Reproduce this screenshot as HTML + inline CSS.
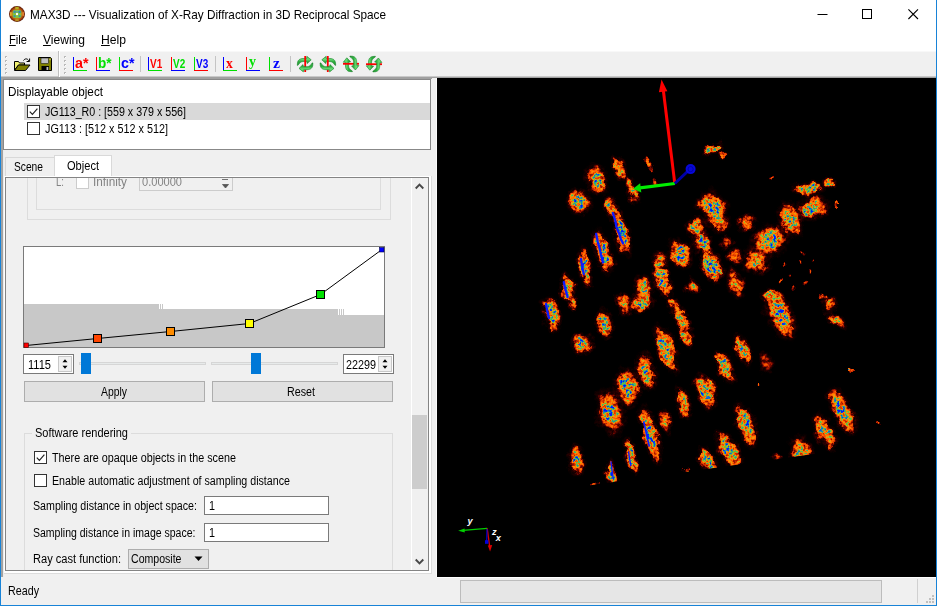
<!DOCTYPE html>
<html><head><meta charset="utf-8"><title>MAX3D</title>
<style>
html,body{margin:0;padding:0;background:#fff;}
body{width:937px;height:606px;position:relative;overflow:hidden;font-family:'Liberation Sans', sans-serif;}
.b{position:absolute;}
.t{position:absolute;white-space:pre;transform-origin:0 50%;display:block;}
svg{position:absolute;overflow:visible;}
u{text-decoration:underline;text-underline-offset:1px;}
</style></head><body>
<div class="b" style="left:0px;top:0px;width:937px;height:606px;background:#f0f0f0;"></div>
<div class="b" style="left:0px;top:0px;width:937px;height:51px;background:#ffffff;"></div>
<svg style="left:9px;top:6px" width="16" height="16" viewBox="0 0 16 16">
<defs><radialGradient id="ig" cx="50%" cy="50%" r="50%">
<stop offset="0.55" stop-color="#c47a18"/><stop offset="0.78" stop-color="#a8480e"/>
<stop offset="0.93" stop-color="#6e2006"/><stop offset="1" stop-color="#541806"/></radialGradient></defs>
<ellipse cx="8" cy="8" rx="8" ry="7.9" fill="url(#ig)"/>
<ellipse cx="1.9" cy="8" rx="1" ry="2.2" fill="#e0a828"/><ellipse cx="14.1" cy="8" rx="1" ry="2.2" fill="#e08030"/>
<rect x="6.3" y="0.8" width="3.4" height="2.4" fill="#b8b020"/><rect x="6.3" y="12.8" width="3.4" height="2.4" fill="#b89020"/>
<rect x="3.6" y="3.9" width="8.8" height="8.2" rx="2" fill="#86c23c"/>
<circle cx="5.6" cy="5.9" r="1.3" fill="#3f8fa8"/><circle cx="10.6" cy="5.9" r="1.3" fill="#2f86b0"/>
<circle cx="5.6" cy="10.1" r="1.2" fill="#3a98a0"/><circle cx="10.6" cy="10.1" r="1.2" fill="#3a98a0"/>
<circle cx="8" cy="5.6" r="0.9" fill="#5a9ab0"/>
<rect x="7" y="7.1" width="2" height="2" fill="#ffffff"/>
</svg>
<span class="t" style="left:30px;top:5.5px;font-size:13px;line-height:18px;color:#000;font-weight:400;font-family:'Liberation Sans', sans-serif;transform:scaleX(0.9052);">MAX3D --- Visualization of X-Ray Diffraction in 3D Reciprocal Space</span>
<svg style="left:780px;top:0" width="157" height="30" viewBox="0 0 157 30">
<path d="M37.5 14.5h10" stroke="#000" stroke-width="1" fill="none"/>
<rect x="82.5" y="9.5" width="9" height="9" stroke="#000" stroke-width="1" fill="none"/>
<path d="M128.4 9.4l9.6 9.6M138 9.4l-9.6 9.6" stroke="#000" stroke-width="1.1" fill="none"/>
</svg>
<span class="t" style="left:9px;top:30.5px;font-size:13px;line-height:18px;color:#000;font-weight:400;font-family:'Liberation Sans', sans-serif;transform:scaleX(0.8591);"><u>F</u>ile</span>
<span class="t" style="left:43px;top:30.5px;font-size:13px;line-height:18px;color:#000;font-weight:400;font-family:'Liberation Sans', sans-serif;transform:scaleX(0.9272);"><u>V</u>iewing</span>
<span class="t" style="left:101px;top:30.5px;font-size:13px;line-height:18px;color:#000;font-weight:400;font-family:'Liberation Sans', sans-serif;transform:scaleX(0.9346);"><u>H</u>elp</span>
<div class="b" style="left:0px;top:51px;width:937px;height:26px;background:#f0f0f0;"></div>
<div class="b" style="left:0px;top:51px;width:937px;height:1px;background:#f8f8f8;"></div>
<div class="b" style="left:0px;top:76px;width:937px;height:1px;background:#c8c8c8;"></div>
<div class="b" style="left:0px;top:77px;width:937px;height:1px;background:#a0a0a0;"></div>
<div class="b" style="left:5px;top:56px;width:2px;height:2px;background:#b8b8b8;"></div><div class="b" style="left:6px;top:57px;width:1px;height:1px;background:#ffffff;"></div><div class="b" style="left:5px;top:60px;width:2px;height:2px;background:#b8b8b8;"></div><div class="b" style="left:6px;top:61px;width:1px;height:1px;background:#ffffff;"></div><div class="b" style="left:5px;top:64px;width:2px;height:2px;background:#b8b8b8;"></div><div class="b" style="left:6px;top:65px;width:1px;height:1px;background:#ffffff;"></div><div class="b" style="left:5px;top:68px;width:2px;height:2px;background:#b8b8b8;"></div><div class="b" style="left:6px;top:69px;width:1px;height:1px;background:#ffffff;"></div><div class="b" style="left:5px;top:72px;width:2px;height:2px;background:#b8b8b8;"></div><div class="b" style="left:6px;top:73px;width:1px;height:1px;background:#ffffff;"></div>
<div class="b" style="left:64px;top:56px;width:2px;height:2px;background:#b8b8b8;"></div><div class="b" style="left:65px;top:57px;width:1px;height:1px;background:#ffffff;"></div><div class="b" style="left:64px;top:60px;width:2px;height:2px;background:#b8b8b8;"></div><div class="b" style="left:65px;top:61px;width:1px;height:1px;background:#ffffff;"></div><div class="b" style="left:64px;top:64px;width:2px;height:2px;background:#b8b8b8;"></div><div class="b" style="left:65px;top:65px;width:1px;height:1px;background:#ffffff;"></div><div class="b" style="left:64px;top:68px;width:2px;height:2px;background:#b8b8b8;"></div><div class="b" style="left:65px;top:69px;width:1px;height:1px;background:#ffffff;"></div><div class="b" style="left:64px;top:72px;width:2px;height:2px;background:#b8b8b8;"></div><div class="b" style="left:65px;top:73px;width:1px;height:1px;background:#ffffff;"></div>
<div class="b" style="left:58px;top:51px;width:1px;height:26px;background:#c0c0c0;"></div>
<div class="b" style="left:59px;top:51px;width:1px;height:26px;background:#ffffff;"></div>
<svg style="left:14px;top:56px" width="18" height="16" viewBox="0 0 18 16">
<path d="M0.5 5.5h4l1 1.5h5v2H4.5L0.5 14z" fill="#f0f070" stroke="#000" stroke-width="1" stroke-linejoin="round"/>
<path d="M0.5 14.5L4.5 9H16L11.5 14.5z" fill="#808000" stroke="#000" stroke-width="1" stroke-linejoin="round"/>
<path d="M9.5 4.5c1.5-2.2 4-2.2 5.3 0.3" fill="none" stroke="#000" stroke-width="1"/>
<path d="M15.6 2.5v3h-3" fill="none" stroke="#000" stroke-width="1"/>
</svg>
<svg style="left:38px;top:57px" width="14" height="14" viewBox="0 0 14 14">
<path d="M0.5 0.5h12l1 1v12H0.5z" fill="#808000" stroke="#000" stroke-width="1"/>
<rect x="3" y="1" width="7.5" height="5.5" fill="#c0c0c0" stroke="#000" stroke-width="0.5"/>
<rect x="11.5" y="1.8" width="1" height="1.4" fill="#e0e0a0"/>
<rect x="3.5" y="9" width="7.5" height="4.5" fill="#000"/>
<rect x="8.5" y="10" width="1.8" height="3" fill="#c0c0c0"/>
</svg>
<div class="b" style="left:73px;top:57px;width:1px;height:13px;background:#0000ff;"></div><div class="b" style="left:73px;top:70px;width:14px;height:1px;background:#00e000;"></div><span class="t" style="left:74.5px;top:52.8px;font-size:15px;line-height:20px;color:#ff0000;font-weight:700;font-family:'Liberation Sans', sans-serif;transform:scaleX(0.9515);">a*</span>
<div class="b" style="left:96px;top:57px;width:1px;height:13px;background:#ff0000;"></div><div class="b" style="left:96px;top:70px;width:14px;height:1px;background:#0000ff;"></div><span class="t" style="left:97.5px;top:52.8px;font-size:15px;line-height:20px;color:#00e000;font-weight:700;font-family:'Liberation Sans', sans-serif;transform:scaleX(0.9000);">b*</span>
<div class="b" style="left:119px;top:57px;width:1px;height:13px;background:#00e000;"></div><div class="b" style="left:119px;top:70px;width:14px;height:1px;background:#ff0000;"></div><span class="t" style="left:120.5px;top:52.8px;font-size:15px;line-height:20px;color:#0000ff;font-weight:700;font-family:'Liberation Sans', sans-serif;transform:scaleX(0.9515);">c*</span>
<div class="b" style="left:140px;top:56px;width:1px;height:16px;background:#c4c4c4;"></div>
<div class="b" style="left:148px;top:57px;width:1px;height:13px;background:#0000ff;"></div><div class="b" style="left:148px;top:70px;width:14px;height:1px;background:#00e000;"></div><span class="t" style="left:150px;top:56.0px;font-size:12.5px;line-height:17px;color:#ff0000;font-weight:700;font-family:'Liberation Sans', sans-serif;transform:scaleX(0.7975);">V1</span>
<div class="b" style="left:171px;top:57px;width:1px;height:13px;background:#ff0000;"></div><div class="b" style="left:171px;top:70px;width:14px;height:1px;background:#0000ff;"></div><span class="t" style="left:173px;top:56.0px;font-size:12.5px;line-height:17px;color:#00e000;font-weight:700;font-family:'Liberation Sans', sans-serif;transform:scaleX(0.7975);">V2</span>
<div class="b" style="left:194px;top:57px;width:1px;height:13px;background:#00e000;"></div><div class="b" style="left:194px;top:70px;width:14px;height:1px;background:#ff0000;"></div><span class="t" style="left:196px;top:56.0px;font-size:12.5px;line-height:17px;color:#0000ff;font-weight:700;font-family:'Liberation Sans', sans-serif;transform:scaleX(0.7975);">V3</span>
<div class="b" style="left:215px;top:56px;width:1px;height:16px;background:#c4c4c4;"></div>
<div class="b" style="left:223px;top:57px;width:1px;height:13px;background:#0000ff;"></div><div class="b" style="left:223px;top:70px;width:14px;height:1px;background:#00e000;"></div><span class="t" style="left:226.4px;top:52.6px;font-size:15px;line-height:20px;color:#ff0000;font-weight:700;font-family:'Liberation Serif', serif;transform:scaleX(0.9067);">x</span>
<div class="b" style="left:246px;top:57px;width:1px;height:13px;background:#ff0000;"></div><div class="b" style="left:246px;top:70px;width:14px;height:1px;background:#0000ff;"></div><span class="t" style="left:249px;top:50.6px;font-size:15px;line-height:20px;color:#00e000;font-weight:700;font-family:'Liberation Serif', serif;transform:scaleX(0.9333);">y</span>
<div class="b" style="left:269px;top:57px;width:1px;height:13px;background:#00e000;"></div><div class="b" style="left:269px;top:70px;width:14px;height:1px;background:#ff0000;"></div><span class="t" style="left:272.5px;top:52.6px;font-size:15px;line-height:20px;color:#0000ff;font-weight:700;font-family:'Liberation Serif', serif;transform:scaleX(1.0492);">z</span>
<div class="b" style="left:290px;top:56px;width:1px;height:16px;background:#c4c4c4;"></div>
<svg style="left:297px;top:56px" width="17" height="17" viewBox="0 0 17 17"><defs><linearGradient id="rg1" x1="0" y1="0" x2="0" y2="1"><stop offset="0" stop-color="#44c455"/><stop offset="0.3" stop-color="#6ee07a"/><stop offset="0.6" stop-color="#2fae40"/><stop offset="1" stop-color="#1f962f"/></linearGradient></defs>
<g transform="rotate(0 8 8)">
<path d="M0.3 9.3L0.5 6.4C1 4.5 2.2 2.6 6.1 2.5L9.8 2.3L9.8 0.3L14.2 3.8L10.2 7.6L9.8 5.6L6.1 5.5C4.2 5.6 2.2 7 1 9.3z" fill="url(#rg1)" stroke="#168226" stroke-width="0.6" stroke-linejoin="round"/>
<rect x="7.3" y="0" width="1.8" height="16" fill="#ff0000"/>
<path d="M0.3 9.3L0.5 6.4C1 4.5 2.2 2.6 6.1 2.5L9.8 2.3L9.8 0.3L14.2 3.8L10.2 7.6L9.8 5.6L6.1 5.5C4.2 5.6 2.2 7 1 9.3z" transform="rotate(180 8.1 8.1)" fill="url(#rg1)" stroke="#168226" stroke-width="0.6" stroke-linejoin="round"/>
</g></svg>
<svg style="left:320px;top:56px" width="17" height="17" viewBox="0 0 17 17"><defs><linearGradient id="rg2" x1="0" y1="0" x2="0" y2="1"><stop offset="0" stop-color="#44c455"/><stop offset="0.3" stop-color="#6ee07a"/><stop offset="0.6" stop-color="#2fae40"/><stop offset="1" stop-color="#1f962f"/></linearGradient></defs>
<g transform="rotate(0 8 8) translate(16 0) scale(-1 1)">
<path d="M0.3 9.3L0.5 6.4C1 4.5 2.2 2.6 6.1 2.5L9.8 2.3L9.8 0.3L14.2 3.8L10.2 7.6L9.8 5.6L6.1 5.5C4.2 5.6 2.2 7 1 9.3z" fill="url(#rg2)" stroke="#168226" stroke-width="0.6" stroke-linejoin="round"/>
<rect x="7.3" y="0" width="1.8" height="16" fill="#ff0000"/>
<path d="M0.3 9.3L0.5 6.4C1 4.5 2.2 2.6 6.1 2.5L9.8 2.3L9.8 0.3L14.2 3.8L10.2 7.6L9.8 5.6L6.1 5.5C4.2 5.6 2.2 7 1 9.3z" transform="rotate(180 8.1 8.1)" fill="url(#rg2)" stroke="#168226" stroke-width="0.6" stroke-linejoin="round"/>
</g></svg>
<svg style="left:343px;top:56px" width="17" height="17" viewBox="0 0 17 17"><defs><linearGradient id="rg3" x1="0" y1="0" x2="0" y2="1"><stop offset="0" stop-color="#44c455"/><stop offset="0.3" stop-color="#6ee07a"/><stop offset="0.6" stop-color="#2fae40"/><stop offset="1" stop-color="#1f962f"/></linearGradient></defs>
<g transform="rotate(-90 8 8)">
<path d="M0.3 9.3L0.5 6.4C1 4.5 2.2 2.6 6.1 2.5L9.8 2.3L9.8 0.3L14.2 3.8L10.2 7.6L9.8 5.6L6.1 5.5C4.2 5.6 2.2 7 1 9.3z" fill="url(#rg3)" stroke="#168226" stroke-width="0.6" stroke-linejoin="round"/>
<rect x="7.3" y="0" width="1.8" height="16" fill="#ff0000"/>
<path d="M0.3 9.3L0.5 6.4C1 4.5 2.2 2.6 6.1 2.5L9.8 2.3L9.8 0.3L14.2 3.8L10.2 7.6L9.8 5.6L6.1 5.5C4.2 5.6 2.2 7 1 9.3z" transform="rotate(180 8.1 8.1)" fill="url(#rg3)" stroke="#168226" stroke-width="0.6" stroke-linejoin="round"/>
</g></svg>
<svg style="left:366px;top:56px" width="17" height="17" viewBox="0 0 17 17"><defs><linearGradient id="rg4" x1="0" y1="0" x2="0" y2="1"><stop offset="0" stop-color="#44c455"/><stop offset="0.3" stop-color="#6ee07a"/><stop offset="0.6" stop-color="#2fae40"/><stop offset="1" stop-color="#1f962f"/></linearGradient></defs>
<g transform="rotate(-90 8 8) translate(16 0) scale(-1 1)">
<path d="M0.3 9.3L0.5 6.4C1 4.5 2.2 2.6 6.1 2.5L9.8 2.3L9.8 0.3L14.2 3.8L10.2 7.6L9.8 5.6L6.1 5.5C4.2 5.6 2.2 7 1 9.3z" fill="url(#rg4)" stroke="#168226" stroke-width="0.6" stroke-linejoin="round"/>
<rect x="7.3" y="0" width="1.8" height="16" fill="#ff0000"/>
<path d="M0.3 9.3L0.5 6.4C1 4.5 2.2 2.6 6.1 2.5L9.8 2.3L9.8 0.3L14.2 3.8L10.2 7.6L9.8 5.6L6.1 5.5C4.2 5.6 2.2 7 1 9.3z" transform="rotate(180 8.1 8.1)" fill="url(#rg4)" stroke="#168226" stroke-width="0.6" stroke-linejoin="round"/>
</g></svg>
<div class="b" style="left:0px;top:78px;width:432px;height:1px;background:#a0a0a0;"></div>
<div class="b" style="left:3px;top:79px;width:428px;height:71px;background:#ffffff;border:1px solid #888888;box-sizing:border-box;"></div>
<div class="b" style="left:436px;top:78px;width:1px;height:499px;background:#fafafa;"></div>
<span class="t" style="left:8px;top:83.0px;font-size:13px;line-height:18px;color:#000;font-weight:400;font-family:'Liberation Sans', sans-serif;transform:scaleX(0.9003);">Displayable object</span>
<div class="b" style="left:24px;top:103px;width:406px;height:17px;background:#d9d9d9;"></div>
<svg style="left:27px;top:105px" width="13" height="13" viewBox="0 0 13 13"><rect x="0.5" y="0.5" width="12" height="12" fill="#fff" stroke="#333"/><path d="M2.8 6.6l2.6 2.7 5-5.6" fill="none" stroke="#222" stroke-width="1.2"/></svg>
<svg style="left:27px;top:122px" width="13" height="13" viewBox="0 0 13 13"><rect x="0.5" y="0.5" width="12" height="12" fill="#fff" stroke="#333"/></svg>
<span class="t" style="left:45px;top:103.5px;font-size:12px;line-height:16px;color:#000;font-weight:400;font-family:'Liberation Sans', sans-serif;transform:scaleX(0.8892);">JG113_R0 : [559 x 379 x 556]</span>
<span class="t" style="left:45px;top:120.5px;font-size:12px;line-height:16px;color:#000;font-weight:400;font-family:'Liberation Sans', sans-serif;transform:scaleX(0.9008);">JG113 : [512 x 512 x 512]</span>
<div class="b" style="left:5px;top:157px;width:50px;height:20px;background:#f0f0f0;border:1px solid #d9d9d9;box-sizing:border-box;"></div>
<div class="b" style="left:54px;top:155px;width:58px;height:23px;background:#ffffff;border:1px solid #d9d9d9;box-sizing:border-box;"></div>
<span class="t" style="left:14px;top:158.5px;font-size:12px;line-height:16px;color:#000;font-weight:400;font-family:'Liberation Sans', sans-serif;transform:scaleX(0.8522);">Scene</span>
<span class="t" style="left:67px;top:157.5px;font-size:12px;line-height:16px;color:#000;font-weight:400;font-family:'Liberation Sans', sans-serif;transform:scaleX(0.9225);">Object</span>
<div class="b" style="left:4px;top:176px;width:427px;height:397px;background:#ffffff;"></div>
<div class="b" style="left:4px;top:573px;width:428px;height:1px;background:#dcdcdc;"></div>
<div class="b" style="left:431px;top:176px;width:1px;height:398px;background:#dcdcdc;"></div>
<div class="b" style="left:5px;top:177px;width:424px;height:394px;border:1px solid #848484;box-sizing:border-box;background:#f0f0f0;overflow:hidden">
<div class="b" style="left:21px;top:-28px;width:364px;height:70px;border:1px solid #dcdcdc;box-sizing:border-box;"></div>
<div class="b" style="left:30px;top:-28px;width:345px;height:60px;border:1px solid #dcdcdc;box-sizing:border-box;"></div>
<span class="t" style="left:50px;top:-4.0px;font-size:12px;line-height:16px;color:#838383;font-weight:400;font-family:'Liberation Sans', sans-serif;transform:scaleX(0.7988);">L:</span>
<div class="b" style="left:70px;top:-2px;width:13px;height:13px;background:#fff;border:1px solid #cccccc;box-sizing:border-box;"></div>
<span class="t" style="left:87px;top:-4.0px;font-size:12px;line-height:16px;color:#838383;font-weight:400;font-family:'Liberation Sans', sans-serif;transform:scaleX(0.9802);">Infinity</span>
<div class="b" style="left:133px;top:-6px;width:94px;height:19px;background:#f0f0f0;border:1px solid #cccccc;box-sizing:border-box;"></div>
<span class="t" style="left:136px;top:-4.0px;font-size:12px;line-height:16px;color:#838383;font-weight:400;font-family:'Liberation Sans', sans-serif;transform:scaleX(0.9219);">0.00000</span>
<svg style="left:215px;top:0px" width="9" height="12" viewBox="0 0 9 12"><path d="M1 1.5h6M1.5 6.5h6l-3 3.5z" fill="#555" stroke="#555" stroke-width="0.8"/></svg>
<div class="b" style="left:17px;top:68px;width:362px;height:102px;background:#ffffff;border:1px solid #7a7a7a;box-sizing:border-box;"></div>
<svg style="left:18px;top:69px" width="360" height="100" viewBox="24 247 360 100">
<path d="M24 347V304H159V309H160V304h1v5h1v-5h1v5H337V309h1v6h1v-6h1v6h1v-6h1v6h1v-6h1v6H384V347z" fill="#c8c8c8"/>
<path d="M26 345.5L97.5 338.5L170.5 331.5L249.5 323.5L320.5 294.5L382 249.5" fill="none" stroke="#000" stroke-width="1"/>
<rect x="24" y="343" width="4.5" height="4.5" fill="#ff0000" stroke="#400" stroke-width="0.6"/>
<rect x="93.5" y="334.5" width="8" height="8" fill="#ff4500" stroke="#000" stroke-width="1"/>
<rect x="166.5" y="327.5" width="8" height="8" fill="#ff8c00" stroke="#000" stroke-width="1"/>
<rect x="245.5" y="319.5" width="8" height="8" fill="#ffff00" stroke="#000" stroke-width="1"/>
<rect x="316.5" y="290.5" width="8" height="8" fill="#00e000" stroke="#000" stroke-width="1"/>
<rect x="379.5" y="247.5" width="4.5" height="4.5" fill="#0000ff" stroke="#004" stroke-width="0.6"/>
</svg>
<div class="b" style="left:17px;top:176px;width:51px;height:20px;background:#fff;border:1px solid #7a7a7a;box-sizing:border-box;"></div><div class="b" style="left:52px;top:178px;width:14px;height:16px;background:#f0f0f0;border:1px solid #c8c8c8;box-sizing:border-box;"></div><svg style="left:55px;top:180px" width="8" height="12" viewBox="0 0 8 12"><path d="M1.5 4.3h5l-2.5-3zM1.5 7.7h5l-2.5 3z" fill="#000"/></svg><span class="t" style="left:22px;top:178.5px;font-size:12px;line-height:16px;color:#000;font-weight:400;font-family:'Liberation Sans', sans-serif;transform:scaleX(0.9229);">1115</span>
<div class="b" style="left:337px;top:176px;width:51px;height:20px;background:#fff;border:1px solid #7a7a7a;box-sizing:border-box;"></div><div class="b" style="left:372px;top:178px;width:14px;height:16px;background:#f0f0f0;border:1px solid #c8c8c8;box-sizing:border-box;"></div><svg style="left:375px;top:180px" width="8" height="12" viewBox="0 0 8 12"><path d="M1.5 4.3h5l-2.5-3zM1.5 7.7h5l-2.5 3z" fill="#000"/></svg><span class="t" style="left:340px;top:178.5px;font-size:12px;line-height:16px;color:#000;font-weight:400;font-family:'Liberation Sans', sans-serif;transform:scaleX(0.8989);">22299</span>
<div class="b" style="left:73px;top:184px;width:127px;height:3px;background:#e7eaea;border:1px solid #d6d6d6;box-sizing:border-box;"></div>
<div class="b" style="left:205px;top:184px;width:127px;height:3px;background:#e7eaea;border:1px solid #d6d6d6;box-sizing:border-box;"></div>
<div class="b" style="left:75px;top:175px;width:10px;height:21px;background:#0078d7;"></div>
<div class="b" style="left:245px;top:175px;width:10px;height:21px;background:#0078d7;"></div>
<div class="b" style="left:18px;top:203px;width:181px;height:21px;background:#e1e1e1;border:1px solid #adadad;box-sizing:border-box;"></div>
<div class="b" style="left:206px;top:203px;width:181px;height:21px;background:#e1e1e1;border:1px solid #adadad;box-sizing:border-box;"></div>
<span class="t" style="left:95px;top:206.0px;font-size:12px;line-height:16px;color:#000;font-weight:400;font-family:'Liberation Sans', sans-serif;transform:scaleX(0.8658);">Apply</span>
<span class="t" style="left:281px;top:206.0px;font-size:12px;line-height:16px;color:#000;font-weight:400;font-family:'Liberation Sans', sans-serif;transform:scaleX(0.8929);">Reset</span>
<div class="b" style="left:18px;top:255px;width:369px;height:160px;border:1px solid #dcdcdc;box-sizing:border-box;"></div>
<div class="b" style="left:26px;top:248px;width:99px;height:14px;background:#f0f0f0;"></div>
<span class="t" style="left:29px;top:247.0px;font-size:12px;line-height:16px;color:#000;font-weight:400;font-family:'Liberation Sans', sans-serif;transform:scaleX(0.9172);">Software rendering</span>
<svg style="left:28px;top:273px" width="13" height="13" viewBox="0 0 13 13"><rect x="0.5" y="0.5" width="12" height="12" fill="#fff" stroke="#333"/><path d="M2.8 6.6l2.6 2.7 5-5.6" fill="none" stroke="#222" stroke-width="1.2"/></svg>
<svg style="left:28px;top:296px" width="13" height="13" viewBox="0 0 13 13"><rect x="0.5" y="0.5" width="12" height="12" fill="#fff" stroke="#333"/></svg>
<span class="t" style="left:46px;top:272.0px;font-size:12px;line-height:16px;color:#000;font-weight:400;font-family:'Liberation Sans', sans-serif;transform:scaleX(0.8984);">There are opaque objects in the scene</span>
<span class="t" style="left:46px;top:295.0px;font-size:12px;line-height:16px;color:#000;font-weight:400;font-family:'Liberation Sans', sans-serif;transform:scaleX(0.8897);">Enable automatic adjustment of sampling distance</span>
<span class="t" style="left:27px;top:320.0px;font-size:12px;line-height:16px;color:#000;font-weight:400;font-family:'Liberation Sans', sans-serif;transform:scaleX(0.8875);">Sampling distance in object space:</span>
<span class="t" style="left:27px;top:347.0px;font-size:12px;line-height:16px;color:#000;font-weight:400;font-family:'Liberation Sans', sans-serif;transform:scaleX(0.8763);">Sampling distance in image space:</span>
<div class="b" style="left:198px;top:318px;width:125px;height:19px;background:#fff;border:1px solid #7a7a7a;box-sizing:border-box;"></div>
<div class="b" style="left:198px;top:345px;width:125px;height:19px;background:#fff;border:1px solid #7a7a7a;box-sizing:border-box;"></div>
<span class="t" style="left:203px;top:320.0px;font-size:12px;line-height:16px;color:#000;font-weight:400;font-family:'Liberation Sans', sans-serif;transform:scaleX(0.8972);">1</span>
<span class="t" style="left:203px;top:347.0px;font-size:12px;line-height:16px;color:#000;font-weight:400;font-family:'Liberation Sans', sans-serif;transform:scaleX(0.8972);">1</span>
<span class="t" style="left:27px;top:373.0px;font-size:12px;line-height:16px;color:#000;font-weight:400;font-family:'Liberation Sans', sans-serif;transform:scaleX(0.9225);">Ray cast function:</span>
<div class="b" style="left:122px;top:371px;width:81px;height:20px;background:#e1e1e1;border:1px solid #adadad;box-sizing:border-box;"></div>
<span class="t" style="left:125px;top:373.0px;font-size:12px;line-height:16px;color:#000;font-weight:400;font-family:'Liberation Sans', sans-serif;transform:scaleX(0.8804);">Composite</span>
<svg style="left:188px;top:378px" width="9" height="6" viewBox="0 0 9 6"><path d="M0.5 0.5h8l-4 4.5z" fill="#000"/></svg>
<div class="b" style="left:405px;top:0px;width:1px;height:392px;background:#ffffff;"></div>
<div class="b" style="left:406px;top:0px;width:16px;height:392px;background:#f0f0f0;"></div>
<div class="b" style="left:406px;top:237px;width:15px;height:74px;background:#cdcdcd;"></div>
<svg style="left:409px;top:5px" width="9" height="7" viewBox="0 0 9 7"><path d="M0.7 5.5L4.5 1.7L8.3 5.5" fill="none" stroke="#484848" stroke-width="1.9"/></svg>
<svg style="left:409px;top:380px" width="9" height="7" viewBox="0 0 9 7"><path d="M0.7 1.5L4.5 5.3L8.3 1.5" fill="none" stroke="#484848" stroke-width="1.9"/></svg>
</div>
<span class="t" style="left:7.6px;top:582.0px;font-size:13px;line-height:18px;color:#000;font-weight:400;font-family:'Liberation Sans', sans-serif;transform:scaleX(0.8249);">Ready</span>
<div class="b" style="left:460px;top:580px;width:422px;height:23px;background:#e6e6e6;border:1px solid #bcbcbc;box-sizing:border-box;"></div>
<div class="b" style="left:917px;top:579px;width:1px;height:24px;background:#d0d0d0;"></div>
<div class="b" style="left:932px;top:601px;width:2px;height:2px;background:#bfbfbf;"></div><div class="b" style="left:929px;top:601px;width:2px;height:2px;background:#bfbfbf;"></div><div class="b" style="left:926px;top:601px;width:2px;height:2px;background:#bfbfbf;"></div><div class="b" style="left:932px;top:598px;width:2px;height:2px;background:#bfbfbf;"></div><div class="b" style="left:929px;top:598px;width:2px;height:2px;background:#bfbfbf;"></div><div class="b" style="left:932px;top:595px;width:2px;height:2px;background:#bfbfbf;"></div>
<div class="b" style="left:1px;top:78px;width:2px;height:499px;background:#a2a2a2;"></div>
<div class="b" style="left:3px;top:150px;width:1px;height:427px;background:#ececec;"></div>
<div class="b" style="left:437px;top:577px;width:499px;height:1px;background:#ffffff;"></div>
<div class="b" style="left:0px;top:0px;width:1px;height:606px;background:#1883d7;"></div>
<div class="b" style="left:936px;top:0px;width:1px;height:606px;background:#1883d7;"></div>
<div class="b" style="left:0px;top:605px;width:937px;height:1px;background:#1883d7;"></div>
<svg style="left:437px;top:78px" width="499" height="499" viewBox="437 78 499 499">
<defs>
<radialGradient id="bg"><stop offset="0" stop-color="#fff" stop-opacity="1"/><stop offset="0.4" stop-color="#fff" stop-opacity="0.86"/><stop offset="0.62" stop-color="#fff" stop-opacity="0.56"/><stop offset="0.82" stop-color="#fff" stop-opacity="0.30"/><stop offset="1" stop-color="#fff" stop-opacity="0"/></radialGradient>
<radialGradient id="hg"><stop offset="0" stop-color="#fff" stop-opacity="0.16"/><stop offset="0.6" stop-color="#fff" stop-opacity="0.11"/><stop offset="1" stop-color="#fff" stop-opacity="0"/></radialGradient>
<clipPath id="cp"><path d="M437 78H936V448L814 454L560 489.5L437 507z"/></clipPath>
<filter id="jet" filterUnits="userSpaceOnUse" x="437" y="78" width="499" height="499" color-interpolation-filters="sRGB">
<feTurbulence type="fractalNoise" baseFrequency="0.09" numOctaves="3" seed="11" result="lf"/>
<feDisplacementMap in="SourceGraphic" in2="lf" scale="10" xChannelSelector="R" yChannelSelector="G" result="d"/>
<feTurbulence type="fractalNoise" baseFrequency="0.3" numOctaves="2" seed="5" result="n"/>
<feColorMatrix in="n" type="matrix" values="2.6 0 0 0 -0.8  2.6 0 0 0 -0.8  2.6 0 0 0 -0.8  0 0 0 0 1" result="ng"/>
<feComposite in="d" in2="ng" operator="arithmetic" k1="0.84" k2="0.31" k3="0" k4="0" result="m"/>
<feGaussianBlur in="m" stdDeviation="0.45" result="mb"/>
<feComponentTransfer in="mb">
<feFuncR type="table" tableValues="0 .12 .28 .48 .65 .80 .90 .96 1 1 1 1 .80 .50 .35 .25 .18 .12 .08 .04 0"/><feFuncG type="table" tableValues="0 0 .01 .04 .10 .18 .26 .33 .40 .45 .50 .56 .68 .74 .74 .70 .62 .52 .40 .25 .10"/><feFuncB type="table" tableValues="0 0 0 0 0 0 0 0 0 0 0 .03 .10 .20 .30 .42 .55 .70 .82 .95 1"/>
</feComponentTransfer>
<feGaussianBlur stdDeviation="0.3"/>
</filter>
</defs>
<rect x="437" y="78" width="499" height="499" fill="#000"/>
<g clip-path="url(#cp)"><g filter="url(#jet)"><rect x="437" y="78" width="499" height="499" fill="#000"/>
<ellipse cx="597" cy="180" rx="13.7" ry="18.7" transform="rotate(-10 597 180)" fill="url(#hg)"/>
<ellipse cx="597" cy="180" rx="9.4" ry="14.5" transform="rotate(-10 597 180)" fill="url(#bg)" opacity="1.00"/>
<ellipse cx="579" cy="202" rx="14.3" ry="14.8" transform="rotate(0 579 202)" fill="url(#hg)"/>
<ellipse cx="579" cy="202" rx="9.8" ry="11.3" transform="rotate(0 579 202)" fill="url(#bg)" opacity="1.00"/>
<ellipse cx="619" cy="168" rx="8.3" ry="16.1" transform="rotate(-20 619 168)" fill="url(#hg)"/>
<path d="M0 -13.3Q11.4 0 0 13.3Q-11.4 0 0 -13.3z" transform="translate(619 168) rotate(-20)" fill="url(#bg)" opacity="0.80"/>
<ellipse cx="632" cy="190" rx="6.6" ry="16.1" transform="rotate(-15 632 190)" fill="url(#hg)"/>
<path d="M0 -13.3Q8.7 0 0 13.3Q-8.7 0 0 -13.3z" transform="translate(632 190) rotate(-15)" fill="url(#bg)" opacity="0.70"/>
<path d="M0 -8.8Q6.8 0 0 8.8Q-6.8 0 0 -8.8z" transform="translate(650 164) rotate(-25)" fill="url(#bg)" opacity="0.50"/>
<path d="M0 -5.9Q5.0 0 0 5.9Q-5.0 0 0 -5.9z" transform="translate(656 182) rotate(-30)" fill="url(#bg)" opacity="0.40"/>
<ellipse cx="610" cy="206" rx="7.8" ry="11.6" transform="rotate(-15 610 206)" fill="url(#hg)"/>
<ellipse cx="610" cy="206" rx="5.0" ry="8.7" transform="rotate(-15 610 206)" fill="url(#bg)" opacity="0.90"/>
<ellipse cx="621" cy="231" rx="9.5" ry="30.3" transform="rotate(-15 621 231)" fill="url(#hg)"/>
<path d="M0 -25.9Q13.3 0 0 25.9Q-13.3 0 0 -25.9z" transform="translate(621 231) rotate(-15)" fill="url(#bg)" opacity="1.00"/>
<ellipse cx="603" cy="252" rx="10.1" ry="26.4" transform="rotate(-15 603 252)" fill="url(#hg)"/>
<path d="M0 -22.5Q14.2 0 0 22.5Q-14.2 0 0 -22.5z" transform="translate(603 252) rotate(-15)" fill="url(#bg)" opacity="1.00"/>
<ellipse cx="585" cy="268" rx="8.3" ry="22.5" transform="rotate(-12 585 268)" fill="url(#hg)"/>
<path d="M0 -19.1Q11.4 0 0 19.1Q-11.4 0 0 -19.1z" transform="translate(585 268) rotate(-12)" fill="url(#bg)" opacity="0.90"/>
<ellipse cx="568" cy="289" rx="8.9" ry="18.7" transform="rotate(-12 568 289)" fill="url(#hg)"/>
<path d="M0 -15.6Q12.3 0 0 15.6Q-12.3 0 0 -15.6z" transform="translate(568 289) rotate(-12)" fill="url(#bg)" opacity="0.90"/>
<ellipse cx="552" cy="313" rx="10.7" ry="21.3" transform="rotate(-10 552 313)" fill="url(#hg)"/>
<path d="M0 -17.9Q15.1 0 0 17.9Q-15.1 0 0 -17.9z" transform="translate(552 313) rotate(-10)" fill="url(#bg)" opacity="1.00"/>
<ellipse cx="572" cy="303" rx="6.6" ry="7.7" transform="rotate(0 572 303)" fill="url(#hg)"/>
<ellipse cx="572" cy="303" rx="4.1" ry="5.5" transform="rotate(0 572 303)" fill="url(#bg)" opacity="0.50"/>
<ellipse cx="714" cy="149" rx="12.5" ry="5.7" transform="rotate(-22 714 149)" fill="url(#hg)"/>
<path d="M-9.2 0Q0 8.1 9.2 0Q0 -8.1 -9.2 0z" transform="translate(714 149) rotate(-22)" fill="url(#bg)" opacity="0.90"/>
<ellipse cx="723" cy="154" rx="8.9" ry="4.4" transform="rotate(-22 723 154)" fill="url(#hg)"/>
<path d="M-6.4 0Q0 5.9 6.4 0Q0 -5.9 -6.4 0z" transform="translate(723 154) rotate(-22)" fill="url(#bg)" opacity="0.60"/>
<ellipse cx="715" cy="211" rx="14.9" ry="26.4" transform="rotate(-20 715 211)" fill="url(#hg)"/>
<path d="M0 -22.5Q21.6 0 0 22.5Q-21.6 0 0 -22.5z" transform="translate(715 211) rotate(-20)" fill="url(#bg)" opacity="0.90"/>
<ellipse cx="709" cy="206" rx="17.3" ry="8.3" transform="rotate(20 709 206)" fill="url(#hg)"/>
<path d="M-13.0 0Q0 12.6 13.0 0Q0 -12.6 -13.0 0z" transform="translate(709 206) rotate(20)" fill="url(#bg)" opacity="0.70"/>
<ellipse cx="697" cy="227" rx="12.5" ry="12.2" transform="rotate(-30 697 227)" fill="url(#hg)"/>
<ellipse cx="697" cy="227" rx="8.5" ry="9.2" transform="rotate(-30 697 227)" fill="url(#bg)" opacity="0.80"/>
<ellipse cx="701" cy="242" rx="12.5" ry="12.2" transform="rotate(-30 701 242)" fill="url(#hg)"/>
<ellipse cx="701" cy="242" rx="8.5" ry="9.2" transform="rotate(-30 701 242)" fill="url(#bg)" opacity="0.80"/>
<ellipse cx="680" cy="254" rx="13.1" ry="18.7" transform="rotate(-25 680 254)" fill="url(#hg)"/>
<ellipse cx="680" cy="254" rx="9.0" ry="14.5" transform="rotate(-25 680 254)" fill="url(#bg)" opacity="1.00"/>
<ellipse cx="660" cy="261" rx="11.3" ry="10.3" transform="rotate(-30 660 261)" fill="url(#hg)"/>
<ellipse cx="660" cy="261" rx="7.6" ry="7.6" transform="rotate(-30 660 261)" fill="url(#bg)" opacity="0.70"/>
<ellipse cx="662" cy="279" rx="10.7" ry="22.5" transform="rotate(-20 662 279)" fill="url(#hg)"/>
<path d="M0 -19.1Q15.1 0 0 19.1Q-15.1 0 0 -19.1z" transform="translate(662 279) rotate(-20)" fill="url(#bg)" opacity="0.90"/>
<ellipse cx="644" cy="289" rx="11.3" ry="17.4" transform="rotate(-15 644 289)" fill="url(#hg)"/>
<ellipse cx="644" cy="289" rx="7.6" ry="13.4" transform="rotate(-15 644 289)" fill="url(#bg)" opacity="0.90"/>
<ellipse cx="712" cy="265" rx="12.5" ry="17.4" transform="rotate(-25 712 265)" fill="url(#hg)"/>
<ellipse cx="712" cy="265" rx="8.5" ry="13.4" transform="rotate(-25 712 265)" fill="url(#bg)" opacity="0.80"/>
<ellipse cx="693" cy="287" rx="8.3" ry="10.9" transform="rotate(-20 693 287)" fill="url(#hg)"/>
<ellipse cx="693" cy="287" rx="5.4" ry="8.1" transform="rotate(-20 693 287)" fill="url(#bg)" opacity="0.70"/>
<ellipse cx="770" cy="177" rx="2.4" ry="2.3" transform="rotate(0 770 177)" fill="url(#bg)" opacity="0.40"/>
<ellipse cx="808" cy="189" rx="19.6" ry="9.0" transform="rotate(-5 808 189)" fill="url(#hg)"/>
<path d="M-14.9 0Q0 13.7 14.9 0Q0 -13.7 -14.9 0z" transform="translate(808 189) rotate(-5)" fill="url(#bg)" opacity="0.95"/>
<ellipse cx="830" cy="183" rx="7.2" ry="5.7" transform="rotate(0 830 183)" fill="url(#hg)"/>
<ellipse cx="830" cy="183" rx="4.6" ry="3.9" transform="rotate(0 830 183)" fill="url(#bg)" opacity="0.80"/>
<ellipse cx="812" cy="208" rx="19.6" ry="13.5" transform="rotate(-15 812 208)" fill="url(#hg)"/>
<ellipse cx="812" cy="208" rx="13.8" ry="10.2" transform="rotate(-15 812 208)" fill="url(#bg)" opacity="1.00"/>
<ellipse cx="790" cy="220" rx="12.5" ry="22.5" transform="rotate(-25 790 220)" fill="url(#hg)"/>
<path d="M0 -19.1Q17.9 0 0 19.1Q-17.9 0 0 -19.1z" transform="translate(790 220) rotate(-25)" fill="url(#bg)" opacity="0.90"/>
<ellipse cx="837" cy="203" rx="2.4" ry="3.4" transform="rotate(0 837 203)" fill="url(#bg)" opacity="0.70"/>
<ellipse cx="746" cy="223" rx="10.7" ry="9.6" transform="rotate(-40 746 223)" fill="url(#hg)"/>
<ellipse cx="746" cy="223" rx="7.2" ry="7.1" transform="rotate(-40 746 223)" fill="url(#bg)" opacity="0.60"/>
<ellipse cx="770" cy="240" rx="22.0" ry="18.7" transform="rotate(-30 770 240)" fill="url(#hg)"/>
<ellipse cx="770" cy="240" rx="15.6" ry="14.5" transform="rotate(-30 770 240)" fill="url(#bg)" opacity="1.00"/>
<ellipse cx="756" cy="261" rx="16.1" ry="14.8" transform="rotate(-40 756 261)" fill="url(#hg)"/>
<ellipse cx="756" cy="261" rx="11.2" ry="11.3" transform="rotate(-40 756 261)" fill="url(#bg)" opacity="0.80"/>
<ellipse cx="735" cy="256" rx="8.3" ry="9.0" transform="rotate(-30 735 256)" fill="url(#hg)"/>
<ellipse cx="735" cy="256" rx="5.4" ry="6.5" transform="rotate(-30 735 256)" fill="url(#bg)" opacity="0.50"/>
<ellipse cx="727" cy="242" rx="8.3" ry="7.0" transform="rotate(-30 727 242)" fill="url(#hg)"/>
<ellipse cx="727" cy="242" rx="5.4" ry="4.9" transform="rotate(-30 727 242)" fill="url(#bg)" opacity="0.50"/>
<ellipse cx="704" cy="244" rx="7.8" ry="16.1" transform="rotate(-25 704 244)" fill="url(#hg)"/>
<path d="M0 -13.3Q10.5 0 0 13.3Q-10.5 0 0 -13.3z" transform="translate(704 244) rotate(-25)" fill="url(#bg)" opacity="0.80"/>
<ellipse cx="711" cy="268" rx="10.7" ry="18.7" transform="rotate(-25 711 268)" fill="url(#hg)"/>
<path d="M0 -15.6Q15.1 0 0 15.6Q-15.1 0 0 -15.6z" transform="translate(711 268) rotate(-25)" fill="url(#bg)" opacity="0.90"/>
<ellipse cx="735" cy="283" rx="10.7" ry="17.4" transform="rotate(-20 735 283)" fill="url(#hg)"/>
<ellipse cx="735" cy="283" rx="7.2" ry="13.4" transform="rotate(-20 735 283)" fill="url(#bg)" opacity="0.60"/>
<ellipse cx="772" cy="296" rx="13.7" ry="7.7" transform="rotate(10 772 296)" fill="url(#hg)"/>
<path d="M-10.2 0Q0 11.5 10.2 0Q0 -11.5 -10.2 0z" transform="translate(772 296) rotate(10)" fill="url(#bg)" opacity="0.80"/>
<ellipse cx="804" cy="282" rx="2.8" ry="2.8" transform="rotate(0 804 282)" fill="url(#bg)" opacity="0.40"/>
<path d="M-4.0 0Q0 5.9 4.0 0Q0 -5.9 -4.0 0z" transform="translate(823 297) rotate(0)" fill="url(#bg)" opacity="0.50"/>
<ellipse cx="785" cy="265" rx="1.9" ry="2.3" transform="rotate(0 785 265)" fill="url(#bg)" opacity="0.35"/>
<ellipse cx="790" cy="275" rx="1.9" ry="2.3" transform="rotate(0 790 275)" fill="url(#bg)" opacity="0.35"/>
<ellipse cx="798" cy="262" rx="1.9" ry="2.3" transform="rotate(0 798 262)" fill="url(#bg)" opacity="0.35"/>
<ellipse cx="810" cy="270" rx="1.9" ry="2.3" transform="rotate(0 810 270)" fill="url(#bg)" opacity="0.35"/>
<ellipse cx="795" cy="288" rx="1.9" ry="2.3" transform="rotate(0 795 288)" fill="url(#bg)" opacity="0.35"/>
<ellipse cx="780" cy="280" rx="1.9" ry="2.3" transform="rotate(0 780 280)" fill="url(#bg)" opacity="0.35"/>
<ellipse cx="803" cy="253" rx="1.9" ry="2.3" transform="rotate(0 803 253)" fill="url(#bg)" opacity="0.35"/>
<ellipse cx="815" cy="262" rx="1.9" ry="2.3" transform="rotate(0 815 262)" fill="url(#bg)" opacity="0.30"/>
<ellipse cx="604" cy="324" rx="10.7" ry="17.4" transform="rotate(-10 604 324)" fill="url(#hg)"/>
<ellipse cx="604" cy="324" rx="7.2" ry="13.4" transform="rotate(-10 604 324)" fill="url(#bg)" opacity="0.95"/>
<ellipse cx="582" cy="344" rx="12.5" ry="13.5" transform="rotate(-10 582 344)" fill="url(#hg)"/>
<ellipse cx="582" cy="344" rx="8.5" ry="10.2" transform="rotate(-10 582 344)" fill="url(#bg)" opacity="1.00"/>
<ellipse cx="624" cy="304" rx="8.3" ry="13.5" transform="rotate(-15 624 304)" fill="url(#hg)"/>
<ellipse cx="624" cy="304" rx="5.4" ry="10.2" transform="rotate(-15 624 304)" fill="url(#bg)" opacity="0.70"/>
<ellipse cx="642" cy="303" rx="14.9" ry="10.9" transform="rotate(-10 642 303)" fill="url(#hg)"/>
<ellipse cx="642" cy="303" rx="10.3" ry="8.1" transform="rotate(-10 642 303)" fill="url(#bg)" opacity="0.90"/>
<ellipse cx="672" cy="304" rx="8.3" ry="7.7" transform="rotate(-20 672 304)" fill="url(#hg)"/>
<ellipse cx="672" cy="304" rx="5.4" ry="5.5" transform="rotate(-20 672 304)" fill="url(#bg)" opacity="0.50"/>
<ellipse cx="681" cy="318" rx="9.5" ry="17.4" transform="rotate(-28 681 318)" fill="url(#hg)"/>
<path d="M0 -14.5Q13.3 0 0 14.5Q-13.3 0 0 -14.5z" transform="translate(681 318) rotate(-28)" fill="url(#bg)" opacity="0.90"/>
<ellipse cx="686" cy="337" rx="7.2" ry="13.5" transform="rotate(-28 686 337)" fill="url(#hg)"/>
<path d="M0 -11.1Q9.6 0 0 11.1Q-9.6 0 0 -11.1z" transform="translate(686 337) rotate(-28)" fill="url(#bg)" opacity="0.80"/>
<ellipse cx="666" cy="349" rx="10.7" ry="30.3" transform="rotate(-20 666 349)" fill="url(#hg)"/>
<path d="M0 -25.9Q15.1 0 0 25.9Q-15.1 0 0 -25.9z" transform="translate(666 349) rotate(-20)" fill="url(#bg)" opacity="0.95"/>
<ellipse cx="646" cy="372" rx="11.3" ry="22.5" transform="rotate(-15 646 372)" fill="url(#hg)"/>
<path d="M0 -19.1Q16.0 0 0 19.1Q-16.0 0 0 -19.1z" transform="translate(646 372) rotate(-15)" fill="url(#bg)" opacity="0.95"/>
<ellipse cx="627" cy="387" rx="14.9" ry="22.5" transform="rotate(-10 627 387)" fill="url(#hg)"/>
<ellipse cx="627" cy="387" rx="10.3" ry="17.7" transform="rotate(-10 627 387)" fill="url(#bg)" opacity="1.00"/>
<ellipse cx="610" cy="412" rx="16.1" ry="27.7" transform="rotate(-12 610 412)" fill="url(#hg)"/>
<ellipse cx="610" cy="412" rx="11.2" ry="21.9" transform="rotate(-12 610 412)" fill="url(#bg)" opacity="1.00"/>
<ellipse cx="704" cy="390" rx="11.3" ry="18.7" transform="rotate(-15 704 390)" fill="url(#hg)"/>
<ellipse cx="704" cy="390" rx="7.6" ry="14.5" transform="rotate(-15 704 390)" fill="url(#bg)" opacity="0.70"/>
<ellipse cx="683" cy="402" rx="8.9" ry="18.7" transform="rotate(-15 683 402)" fill="url(#hg)"/>
<path d="M0 -15.6Q12.3 0 0 15.6Q-12.3 0 0 -15.6z" transform="translate(683 402) rotate(-15)" fill="url(#bg)" opacity="0.90"/>
<ellipse cx="665" cy="421" rx="7.8" ry="14.8" transform="rotate(-15 665 421)" fill="url(#hg)"/>
<path d="M0 -12.2Q10.5 0 0 12.2Q-10.5 0 0 -12.2z" transform="translate(665 421) rotate(-15)" fill="url(#bg)" opacity="0.60"/>
<ellipse cx="650" cy="435" rx="9.5" ry="34.2" transform="rotate(-15 650 435)" fill="url(#hg)"/>
<path d="M0 -29.4Q13.3 0 0 29.4Q-13.3 0 0 -29.4z" transform="translate(650 435) rotate(-15)" fill="url(#bg)" opacity="1.00"/>
<ellipse cx="631" cy="456" rx="7.8" ry="21.3" transform="rotate(-12 631 456)" fill="url(#hg)"/>
<path d="M0 -17.9Q10.5 0 0 17.9Q-10.5 0 0 -17.9z" transform="translate(631 456) rotate(-12)" fill="url(#bg)" opacity="0.95"/>
<ellipse cx="576" cy="459" rx="10.7" ry="17.4" transform="rotate(-5 576 459)" fill="url(#hg)"/>
<ellipse cx="576" cy="459" rx="7.2" ry="13.4" transform="rotate(-5 576 459)" fill="url(#bg)" opacity="1.00"/>
<ellipse cx="612" cy="475" rx="7.2" ry="18.7" transform="rotate(-10 612 475)" fill="url(#hg)"/>
<path d="M0 -15.6Q9.6 0 0 15.6Q-9.6 0 0 -15.6z" transform="translate(612 475) rotate(-10)" fill="url(#bg)" opacity="0.95"/>
<ellipse cx="709" cy="463" rx="10.1" ry="20.0" transform="rotate(-25 709 463)" fill="url(#hg)"/>
<path d="M0 -16.8Q14.2 0 0 16.8Q-14.2 0 0 -16.8z" transform="translate(709 463) rotate(-25)" fill="url(#bg)" opacity="1.00"/>
<path d="M0 -7.1Q5.0 0 0 7.1Q-5.0 0 0 -7.1z" transform="translate(718 360) rotate(-15)" fill="url(#bg)" opacity="0.50"/>
<ellipse cx="595" cy="483" rx="3.2" ry="2.8" transform="rotate(0 595 483)" fill="url(#bg)" opacity="0.60"/>
<ellipse cx="687" cy="470" rx="2.8" ry="2.8" transform="rotate(0 687 470)" fill="url(#bg)" opacity="0.50"/>
<ellipse cx="780" cy="315" rx="14.9" ry="29.0" transform="rotate(-28 780 315)" fill="url(#hg)"/>
<path d="M0 -24.8Q21.6 0 0 24.8Q-21.6 0 0 -24.8z" transform="translate(780 315) rotate(-28)" fill="url(#bg)" opacity="0.95"/>
<ellipse cx="829" cy="304" rx="10.1" ry="9.0" transform="rotate(-30 829 304)" fill="url(#hg)"/>
<ellipse cx="829" cy="304" rx="6.8" ry="6.5" transform="rotate(-30 829 304)" fill="url(#bg)" opacity="0.70"/>
<ellipse cx="836" cy="320" rx="11.9" ry="9.0" transform="rotate(25 836 320)" fill="url(#hg)"/>
<ellipse cx="836" cy="320" rx="8.1" ry="6.5" transform="rotate(25 836 320)" fill="url(#bg)" opacity="0.80"/>
<ellipse cx="743" cy="350" rx="8.9" ry="18.7" transform="rotate(-22 743 350)" fill="url(#hg)"/>
<path d="M0 -15.6Q12.3 0 0 15.6Q-12.3 0 0 -15.6z" transform="translate(743 350) rotate(-22)" fill="url(#bg)" opacity="0.85"/>
<ellipse cx="725" cy="367" rx="9.5" ry="21.3" transform="rotate(-25 725 367)" fill="url(#hg)"/>
<path d="M0 -17.9Q13.3 0 0 17.9Q-13.3 0 0 -17.9z" transform="translate(725 367) rotate(-25)" fill="url(#bg)" opacity="0.90"/>
<ellipse cx="766" cy="363" rx="8.3" ry="12.8" transform="rotate(-15 766 363)" fill="url(#hg)"/>
<ellipse cx="766" cy="363" rx="5.4" ry="9.7" transform="rotate(-15 766 363)" fill="url(#bg)" opacity="0.22"/>
<ellipse cx="758" cy="384" rx="1.9" ry="2.3" transform="rotate(0 758 384)" fill="url(#bg)" opacity="0.90"/>
<ellipse cx="851" cy="370" rx="2.4" ry="2.3" transform="rotate(0 851 370)" fill="url(#bg)" opacity="0.90"/>
<ellipse cx="706" cy="393" rx="11.3" ry="20.0" transform="rotate(-15 706 393)" fill="url(#hg)"/>
<path d="M0 -16.8Q16.0 0 0 16.8Q-16.0 0 0 -16.8z" transform="translate(706 393) rotate(-15)" fill="url(#bg)" opacity="0.80"/>
<ellipse cx="842" cy="411" rx="12.5" ry="29.0" transform="rotate(-28 842 411)" fill="url(#hg)"/>
<path d="M0 -24.8Q17.9 0 0 24.8Q-17.9 0 0 -24.8z" transform="translate(842 411) rotate(-28)" fill="url(#bg)" opacity="0.95"/>
<ellipse cx="825" cy="432" rx="11.3" ry="22.5" transform="rotate(-25 825 432)" fill="url(#hg)"/>
<path d="M0 -19.1Q16.0 0 0 19.1Q-16.0 0 0 -19.1z" transform="translate(825 432) rotate(-25)" fill="url(#bg)" opacity="0.90"/>
<ellipse cx="746" cy="425" rx="11.3" ry="26.4" transform="rotate(-20 746 425)" fill="url(#hg)"/>
<path d="M0 -22.5Q16.0 0 0 22.5Q-16.0 0 0 -22.5z" transform="translate(746 425) rotate(-20)" fill="url(#bg)" opacity="0.95"/>
<ellipse cx="729" cy="451" rx="11.3" ry="25.1" transform="rotate(-25 729 451)" fill="url(#hg)"/>
<path d="M0 -21.4Q16.0 0 0 21.4Q-16.0 0 0 -21.4z" transform="translate(729 451) rotate(-25)" fill="url(#bg)" opacity="0.95"/>
<ellipse cx="801" cy="452" rx="13.7" ry="20.0" transform="rotate(-10 801 452)" fill="url(#hg)"/>
<ellipse cx="801" cy="452" rx="9.4" ry="15.5" transform="rotate(-10 801 452)" fill="url(#bg)" opacity="0.80"/>
<ellipse cx="777" cy="457" rx="6.6" ry="5.1" transform="rotate(0 777 457)" fill="url(#hg)"/>
<ellipse cx="777" cy="457" rx="4.1" ry="3.4" transform="rotate(0 777 457)" fill="url(#bg)" opacity="0.30"/>
<ellipse cx="878" cy="423" rx="2.4" ry="2.8" transform="rotate(0 878 423)" fill="url(#bg)" opacity="0.50"/>
</g></g>
<g clip-path="url(#cp)" fill="none" stroke="#0a1cff" stroke-width="2.3" stroke-linecap="round">
<path d="M612.8 213l2.5 7.5l1 6l3 7.5l1.6 5.2l2.2 4.2"/>
<path d="M596.2 234l1.6 8l2 7l1.2 6l2 7.5"/>
<path d="M581 259l1 6.5l1.8 8.5"/>
<path d="M563.8 282l1.5 7l2.3 8"/>
<path d="M546 304l1.3 7l1.7 7"/>
<path d="M643.8 422l2 9l1.8 8l1.6 7" stroke-width="1.6"/>
<path d="M628.6 452l1 7l1.2 6.5" stroke-width="1.4"/>
<path d="M611 462l1 8l1.4 9" stroke-width="1.4"/>
</g>
<!-- big axes -->
<g>
<path d="M674.8 183.5L663.4 91" stroke="#ff0000" stroke-width="3" fill="none"/>
<path d="M661.5 79.6L658.9 92.2L667.4 91.2z" fill="#ff0000"/>
<path d="M674.8 183.5L640 187.9" stroke="#00ee00" stroke-width="3.2" fill="none"/>
<path d="M633 188.8L640.2 183.3L641.3 192.6z" fill="#00dd00"/>
<path d="M674.8 183.5L688 171" stroke="#0000a8" stroke-width="3" fill="none"/>
<circle cx="690.6" cy="169.1" r="5" fill="#0808d8"/>
<circle cx="690.6" cy="169.1" r="2.6" fill="none" stroke="#0000a0" stroke-width="0.8"/>
</g>
<!-- small axes -->
<g>
<path d="M487.2 528.4L463 530.3" stroke="#00d000" stroke-width="1.3" fill="none"/>
<path d="M458.2 530.7L464.5 528.4L464.8 532.6z" fill="#00d000"/>
<path d="M487.2 528.4L489.6 546" stroke="#e00000" stroke-width="1.3" fill="none"/>
<path d="M490.1 551.4L487.8 545.5L492.2 545z" fill="#e00000"/>
<path d="M487 529L486.7 541" stroke="#0000d0" stroke-width="1.2" fill="none"/>
<rect x="485" y="540.2" width="3.4" height="3.6" fill="#0000e0"/>
<text x="467.5" y="523.6" font-family="Liberation Sans, sans-serif" font-size="9.2" font-style="italic" font-weight="700" fill="#fff">y</text>
<text x="492" y="535.4" font-family="Liberation Sans, sans-serif" font-size="9.2" font-style="italic" font-weight="700" fill="#fff">z</text>
<text x="495.8" y="540.9" font-family="Liberation Sans, sans-serif" font-size="9.2" font-style="italic" font-weight="700" fill="#fff">x</text>
</g>
</svg>
</body></html>
